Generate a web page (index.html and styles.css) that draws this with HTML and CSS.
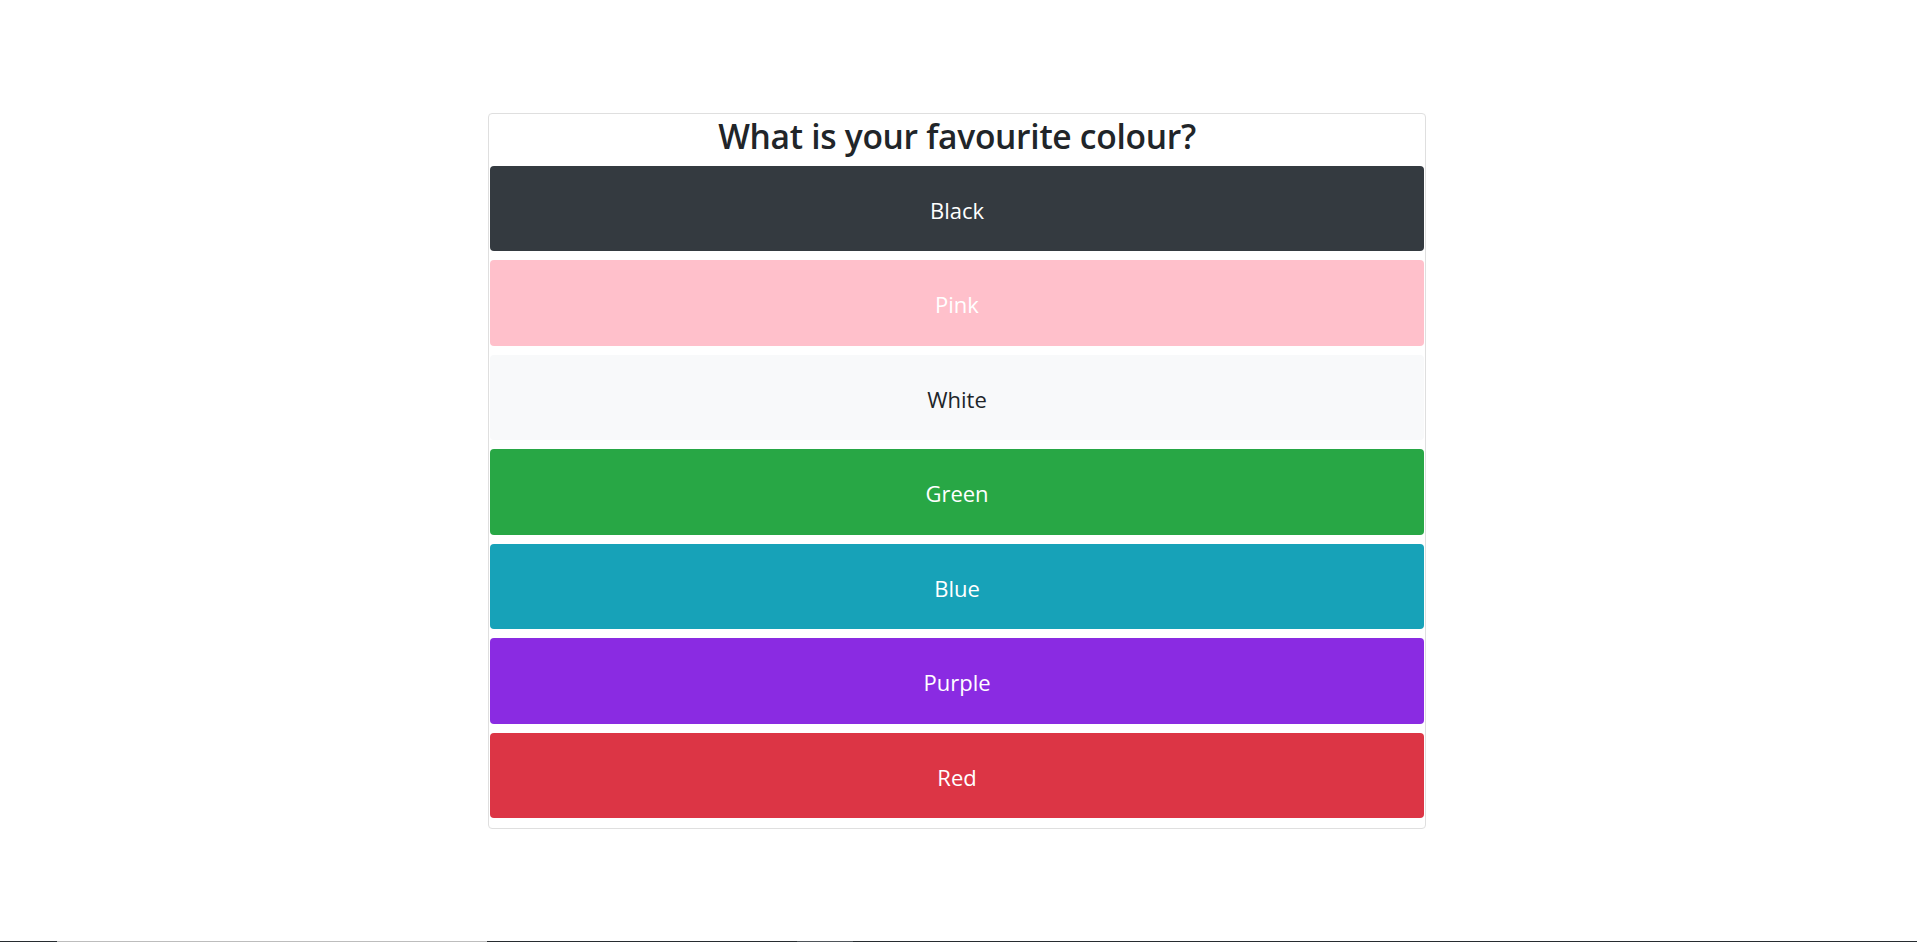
FILE: index.html
```html
<!DOCTYPE html>
<html lang="en">
<head>
<meta charset="utf-8">
<title>Favourite colour</title>
<link rel="stylesheet" href="styles.css">
</head>
<body>
<main class="page">
  <section class="card">
    <h2 class="question">What is your favourite colour?</h2>
    <div class="options">
      <button class="option option-black">Black</button>
      <button class="option option-pink">Pink</button>
      <button class="option option-white">White</button>
      <button class="option option-green">Green</button>
      <button class="option option-blue">Blue</button>
      <button class="option option-purple">Purple</button>
      <button class="option option-red">Red</button>
    </div>
  </section>
</main>
<footer class="footer-strip">
  <span class="seg seg-dark seg-a"></span>
  <span class="seg seg-gray seg-b"></span>
  <span class="seg seg-dark seg-c"></span>
  <span class="seg seg-mid seg-d"></span>
  <span class="seg seg-dark seg-e"></span>
</footer>
</body>
</html>
```
FILE: styles.css
```css
html, body {
  margin: 0;
  padding: 0;
  background: #ffffff;
}
body {
  font-family: "Open Sans", "Noto Sans", "Liberation Sans", sans-serif;
  color: #212529;
  overflow: hidden;
  height: 942px;
}
.page {
  display: flex;
  padding-top: 113px;
  padding-left: 488px;
}
.card {
  width: 936px;
  border: 1px solid #dfdfdf;
  border-radius: 4px;
  background: #fff;
  display: flex;
  flex-direction: column;
}
.question {
  margin: 0;
  height: 52px;
  box-sizing: border-box;
  font-size: 33.6px;
  line-height: 44px;
  font-weight: 600;
  text-align: center;
  color: #212529;
  letter-spacing: -0.3px;
}
.options {
  display: flex;
  flex-direction: column;
  gap: 9.2px;
  padding: 0 1px 10px;
}
.option {
  display: block;
  width: 100%;
  height: 85.3px;
  border: none;
  border-radius: 4px;
  font-family: inherit;
  font-size: 22px;
  color: #ffffff;
  text-align: center;
  padding: 2px 0 0;
}
.option-black { background: #343a40; }
.option-pink { background: #ffc0cb; }
.option-white { background: #f8f9fa; color: #212529; }
.option-green { background: #28a745; }
.option-blue { background: #17a2b8; }
.option-purple { background: #8a2be2; }
.option-red { background: #dc3545; }

.footer-strip {
  display: flex;
  margin-top: 112px;
  height: 30px;
}
.seg { display: block; height: 100%; }
.seg-dark { background: #272c30; }
.seg-gray { background: #bdbdbd; }
.seg-mid { background: #4f555a; }
.seg-a { width: 57px; }
.seg-b { width: 430px; }
.seg-c { width: 310px; }
.seg-d { width: 56px; }
.seg-e { flex: 1; }
```
